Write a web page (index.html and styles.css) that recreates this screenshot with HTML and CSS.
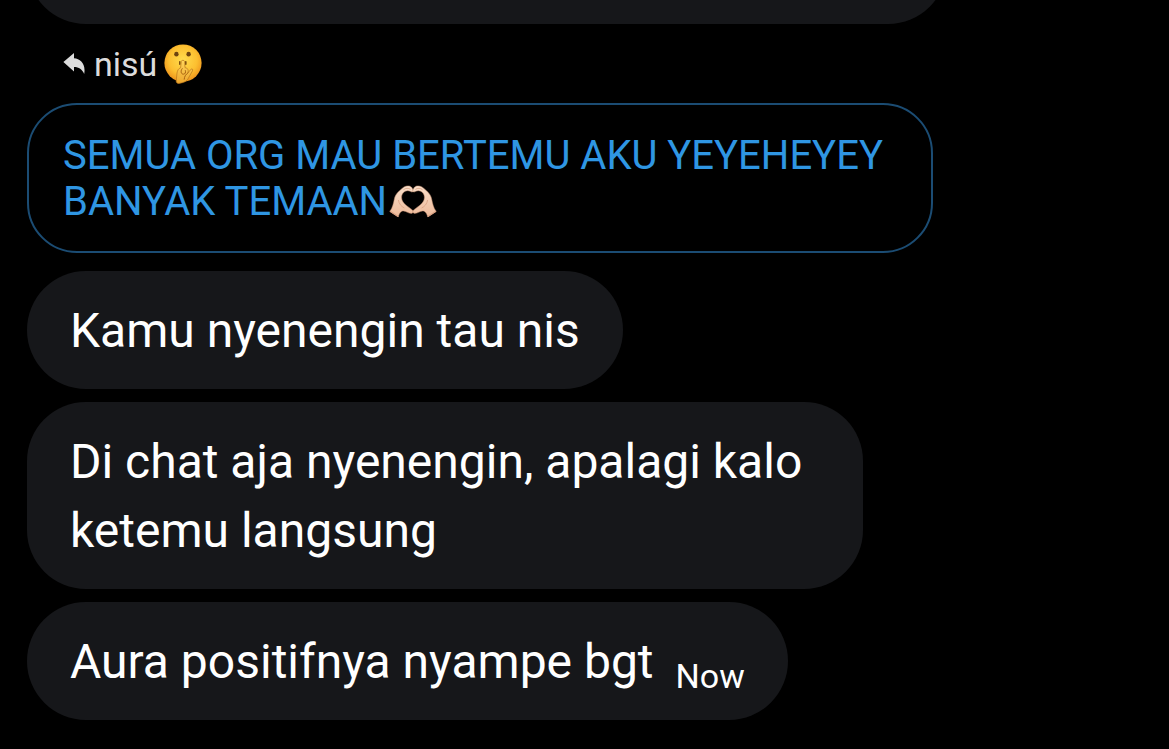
FILE: index.html
```
<!DOCTYPE html>
<html lang="id">
<head>
<meta charset="UTF-8">
<meta name="viewport" content="width=device-width, initial-scale=1">
<title>Chat</title>
<link rel="stylesheet" href="styles.css">
</head>
<body>

<main class="chat">
	<div class="bubble bubble-prev"></div>

	<div class="reply">
		<svg class="reply-icon" viewBox="0 0 22 22" aria-hidden="true">
			<path d="M0.4 9 L11 0 V5.2 C17.4 5.8 23 10.6 21.2 21 C19.2 16.2 16 14 11 14 V18.4 Z" fill="#dcdcdc"/>
		</svg>
		<span class="reply-name">nisú</span>
		<svg class="shush" viewBox="0 0 40 42" role="img" aria-label="shushing face">
			<defs>
				<radialGradient id="face" cx="50%" cy="42%" r="58%">
					<stop offset="0" stop-color="#ffdc4e"/>
					<stop offset="0.65" stop-color="#fcbf30"/>
					<stop offset="1" stop-color="#ee941c"/>
				</radialGradient>
				<linearGradient id="hand" x1="0" y1="0" x2="0" y2="1">
					<stop offset="0" stop-color="#ffd65c"/>
					<stop offset="1" stop-color="#eda62c"/>
				</linearGradient>
			</defs>
			<circle cx="20" cy="20" r="18.6" fill="url(#face)"/>
			<ellipse cx="13.4" cy="11.2" rx="2.2" ry="2.4" fill="#6d4410"/>
			<ellipse cx="25.6" cy="11.2" rx="2.2" ry="2.4" fill="#6d4410"/>
			<path d="M16.8 18.8 V21.2 M22.8 18.8 V21.2" stroke="#75480c" stroke-width="1.5" stroke-linecap="round"/>
			<path d="M18.3 18.5 C18.4 16.8 21.4 16.8 21.6 18.6 L22 24.6 C24.6 24.8 25.8 27 25 29.8 L27.8 26.4 C29.2 25.2 30.4 26.6 29.4 28 L24.8 36.2 C22.6 39.6 19 39.6 16.2 40.4 C14.4 40.8 13.2 39.6 13.2 38 L14 30 C14.4 27.4 15.6 25.4 17.6 24.8 Z" fill="url(#hand)" stroke="#b8741a" stroke-width="0.7"/>
			<path d="M19.2 25.6 C17.4 27.6 17.8 31.2 20.4 31.2 C22.2 31.2 23 29.4 22.4 27.6 M25 29.8 C22.6 31.6 21.4 33.4 21.2 36.2" fill="none" stroke="#a86312" stroke-width="1" stroke-linecap="round"/>
		</svg>
	</div>

	<blockquote class="quote">
		SEMUA ORG MAU BERTEMU AKU YEYEHEYEY BANYAK TEMAAN<svg class="heart-hands" viewBox="0 0 50 36" role="img" aria-label="heart hands">
			<defs>
				<linearGradient id="skin" x1="0" y1="0" x2="0" y2="1">
					<stop offset="0" stop-color="#f9dfca"/>
					<stop offset="1" stop-color="#edb999"/>
				</linearGradient>
				<g id="palm">
					<path d="M0.8 28.4 C3.8 24.6 4.4 20.4 5.4 15.8 C6.4 10.6 11 7 14.4 4.4 C17.4 2.4 21.6 2.4 22.8 4.6 L24.2 7 C24.6 8.8 23.2 9.6 21.8 8.6 C17.4 6 12.4 9.4 12.6 14.6 C12.8 19.4 16.6 22 20 24.4 L23.6 27.2 C24.8 28.4 24.2 30.4 22.4 30.4 C19.4 30.4 17.4 28.4 14.6 28 C11.6 27.8 10.4 30.6 9.2 33.8 Z" fill="url(#skin)" stroke="#c48e70" stroke-width="0.5"/>
					<path d="M14.4 6.8 C16.6 5 19.4 4.8 21.6 6.4 M9.4 17 C10 21 12.2 23.4 15.4 25" fill="none" stroke="#d9a082" stroke-width="0.8"/>
					<path d="M1.4 28.4 L9 33.4" stroke="#d9a184" stroke-width="1.2" stroke-linecap="round"/>
				</g>
			</defs>
			<use href="#palm"/>
			<use href="#palm" transform="translate(48 0) scale(-1 1)"/>
		</svg>
	</blockquote>

	<div class="bubble">Kamu nyenengin tau nis</div>
	<div class="bubble">Di chat aja nyenengin, apalagi kalo ketemu langsung</div>
	<div class="bubble">Aura positifnya nyampe bgt<time class="time">Now</time></div>
</main>

</body>
</html>
```
FILE: styles.css
```
*{
	box-sizing: border-box;
}
body{
	margin: 0;
	background-color: #000;
	color: #fff;
	font-family: Roboto, "Liberation Sans", sans-serif;
}

/* newest message sits at the bottom, older ones run off the top */
.chat{
	display: flex;
	flex-direction: column;
	justify-content: flex-end;
	align-items: flex-start;
	gap: 13px;
	height: 100vh;
	padding: 0 27px 29px;
	overflow: hidden;
}
.bubble{
	flex-shrink: 0;
	max-width: 75%;
	padding: 25px 43px 24px;
	border-radius: 59px;
	background-color: #16171a;
	font-size: 48px;
	line-height: 69px;
}
.bubble-prev{
	width: 82.5%;
	max-width: none;
	min-height: 118px;
}
.time{
	margin-left: 22px;
	font-size: 34px;
	line-height: 34px;
	vertical-align: -10px;
}

.reply{
	display: flex;
	flex-shrink: 0;
	align-items: center;
	height: 53px;
	padding-left: 36px;
	color: #dcdcdc;
	font-size: 34px;
}
.reply-icon{
	width: 22px;
	height: 22px;
	margin-right: 9px;
}
.shush{
	width: 40px;
	height: 42px;
	margin-left: 6px;
}

.quote{
	flex-shrink: 0;
	width: 81.25%;
	margin: 0 0 5px;
	padding: 28px 34px 26px;
	border: 2px solid #1b4c73;
	border-radius: 50px;
	color: #2f96e3;
	font-size: 40px;
	line-height: 46px;
}
.heart-hands{
	width: 50px;
	height: 36px;
	margin-left: 2px;
	vertical-align: -4px;
}
```
